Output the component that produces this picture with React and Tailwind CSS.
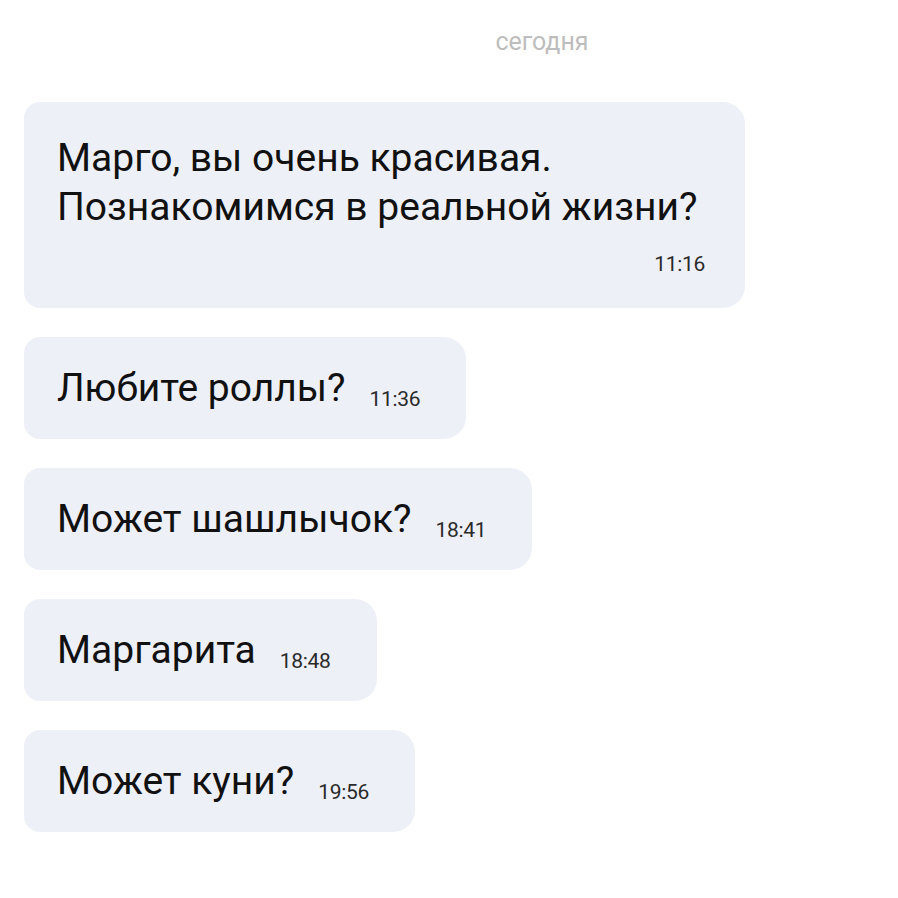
import React from "react";

const messages = [
  { text: "Любите роллы?", time: "11:36" },
  { text: "Может шашлычок?", time: "18:41" },
  { text: "Маргарита", time: "18:48" },
  { text: "Может куни?", time: "19:56" },
];

const Bubble = ({ text, time }) => (
  <div className="flex items-baseline gap-[24px] rounded-r-[22px] rounded-l-[16px] bg-[#eef0f8] pl-[33px] pr-[46px] py-[27px]">
    <span className="text-[39px] leading-[48px] text-[#111]">{text}</span>
    <span className="relative top-[5px] text-[21px] leading-[20px] tracking-[-0.3px] text-[#2a2a2a]">
      {time}
    </span>
  </div>
);

export default function App() {
  return (
    <div className="h-[898px] w-[898px] overflow-hidden bg-white font-['Roboto',sans-serif]">
      <div className="pl-[186px] pt-[27px] text-center text-[25px] leading-[30px] text-[#bdbdbd]">
        сегодня
      </div>

      <div className="mt-[45px] flex flex-col items-start gap-[29px] pl-[24px]">
        {/* first message with two lines */}
        <div className="w-[721px] rounded-r-[22px] rounded-l-[16px] bg-[#eef0f8] pl-[33px] pr-[40px] pt-[32px] pb-[32px]">
          <p className="text-[39px] leading-[49px] text-[#111]">
            Марго, вы очень красивая.
            <br />
            Познакомимся в реальной жизни?
          </p>
          <div className="mt-[20px] text-right text-[21px] leading-[24px] tracking-[-0.3px] text-[#2a2a2a]">
            11:16
          </div>
        </div>

        {messages.map((m) => (
          <Bubble key={m.time} text={m.text} time={m.time} />
        ))}
      </div>
    </div>
  );
}
